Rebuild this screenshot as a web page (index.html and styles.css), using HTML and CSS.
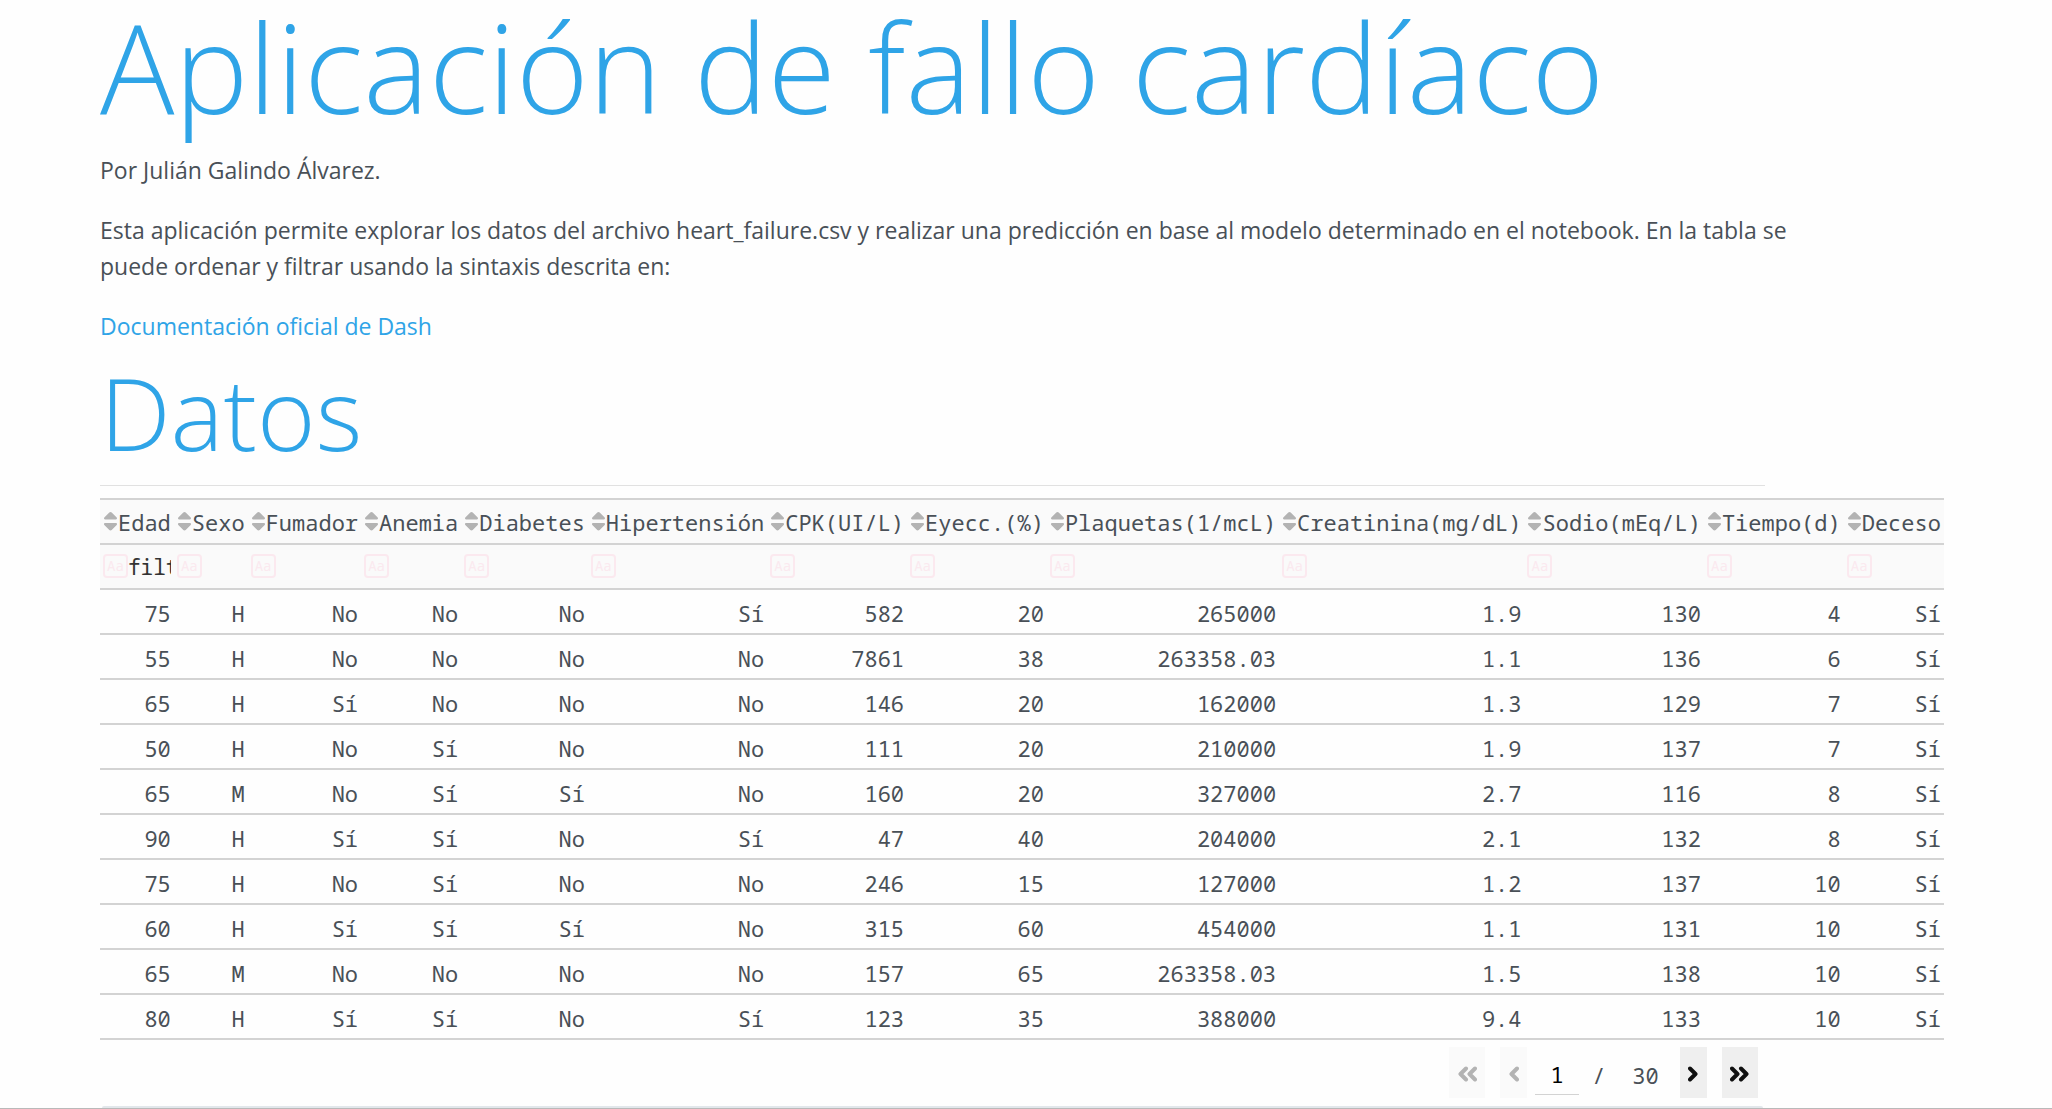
FILE: index.html
```html
<!DOCTYPE html>
<html lang="es">
<head>
<meta charset="utf-8">
<title>Aplicación de fallo cardíaco</title>
<link rel="stylesheet" href="styles.css">
</head>
<body>
<svg class="symbols" aria-hidden="true">
  <symbol id="sort" viewBox="0 0 13 19"><path d="M6.5 0C7 0 7.400 .2 7.700 .5L12.700 5.500C13.300 6.200 12.900 7.500 12 7.500H1C.1 7.500-.3 6.200.3 5.500L5.300.5C5.600.2 6 0 6.500 0ZM1 11H12C12.900 11 13.300 12.300 12.700 13L7.700 18C7.100 18.600 5.900 18.600 5.300 18L.3 13C-.3 12.300.1 11 1 11Z"/></symbol>
  <symbol id="angle" viewBox="0 0 10 16"><path d="M2 2.500 7.500 8 2 13.500"/></symbol>
  <symbol id="double-angle" viewBox="0 0 19 16"><path d="M2 2.500 7.500 8 2 13.500M11 2.500 16.500 8 11 13.500"/></symbol>
</svg>
<main class="container">
  <h1>Aplicación de fallo cardíaco</h1>
  <p>Por Julián Galindo Álvarez.</p>
  <p class="intro">Esta aplicación permite explorar los datos del archivo heart_failure.csv y realizar una predicción en base al modelo determinado en el notebook. En la tabla se puede ordenar y filtrar usando la sintaxis descrita en:</p>
  <p><a href="#">Documentación oficial de Dash</a></p>
  <h2>Datos</h2>
  <hr>
  <table>
    <thead>
      <tr>
        <th><div class="head"><button class="sort" aria-label="Ordenar"><svg><use href="#sort"/></svg></button>Edad</div></th>
        <th><div class="head"><button class="sort" aria-label="Ordenar"><svg><use href="#sort"/></svg></button>Sexo</div></th>
        <th><div class="head"><button class="sort" aria-label="Ordenar"><svg><use href="#sort"/></svg></button>Fumador</div></th>
        <th><div class="head"><button class="sort" aria-label="Ordenar"><svg><use href="#sort"/></svg></button>Anemia</div></th>
        <th><div class="head"><button class="sort" aria-label="Ordenar"><svg><use href="#sort"/></svg></button>Diabetes</div></th>
        <th><div class="head"><button class="sort" aria-label="Ordenar"><svg><use href="#sort"/></svg></button>Hipertensión</div></th>
        <th><div class="head"><button class="sort" aria-label="Ordenar"><svg><use href="#sort"/></svg></button>CPK(UI/L)</div></th>
        <th><div class="head"><button class="sort" aria-label="Ordenar"><svg><use href="#sort"/></svg></button>Eyecc.(%)</div></th>
        <th><div class="head"><button class="sort" aria-label="Ordenar"><svg><use href="#sort"/></svg></button>Plaquetas(1/mcL)</div></th>
        <th><div class="head"><button class="sort" aria-label="Ordenar"><svg><use href="#sort"/></svg></button>Creatinina(mg/dL)</div></th>
        <th><div class="head"><button class="sort" aria-label="Ordenar"><svg><use href="#sort"/></svg></button>Sodio(mEq/L)</div></th>
        <th><div class="head"><button class="sort" aria-label="Ordenar"><svg><use href="#sort"/></svg></button>Tiempo(d)</div></th>
        <th><div class="head"><button class="sort" aria-label="Ordenar"><svg><use href="#sort"/></svg></button>Deceso</div></th>
      </tr>
      <tr>
        <th><div class="filter"><button class="case">Aa</button><input type="text" aria-label="Filtrar Edad" placeholder="filter data..."></div></th>
        <th><div class="filter"><button class="case">Aa</button><input type="text" aria-label="Filtrar Sexo"></div></th>
        <th><div class="filter"><button class="case">Aa</button><input type="text" aria-label="Filtrar Fumador"></div></th>
        <th><div class="filter"><button class="case">Aa</button><input type="text" aria-label="Filtrar Anemia"></div></th>
        <th><div class="filter"><button class="case">Aa</button><input type="text" aria-label="Filtrar Diabetes"></div></th>
        <th><div class="filter"><button class="case">Aa</button><input type="text" aria-label="Filtrar Hipertensión"></div></th>
        <th><div class="filter"><button class="case">Aa</button><input type="text" aria-label="Filtrar CPK"></div></th>
        <th><div class="filter"><button class="case">Aa</button><input type="text" aria-label="Filtrar Eyecc."></div></th>
        <th><div class="filter"><button class="case">Aa</button><input type="text" aria-label="Filtrar Plaquetas"></div></th>
        <th><div class="filter"><button class="case">Aa</button><input type="text" aria-label="Filtrar Creatinina"></div></th>
        <th><div class="filter"><button class="case">Aa</button><input type="text" aria-label="Filtrar Sodio"></div></th>
        <th><div class="filter"><button class="case">Aa</button><input type="text" aria-label="Filtrar Tiempo"></div></th>
        <th><div class="filter"><button class="case">Aa</button><input type="text" aria-label="Filtrar Deceso"></div></th>
      </tr>
    </thead>
    <tbody>
      <tr><td>75</td><td>H</td><td>No</td><td>No</td><td>No</td><td>Sí</td><td>582</td><td>20</td><td>265000</td><td>1.9</td><td>130</td><td>4</td><td>Sí</td></tr>
      <tr><td>55</td><td>H</td><td>No</td><td>No</td><td>No</td><td>No</td><td>7861</td><td>38</td><td>263358.03</td><td>1.1</td><td>136</td><td>6</td><td>Sí</td></tr>
      <tr><td>65</td><td>H</td><td>Sí</td><td>No</td><td>No</td><td>No</td><td>146</td><td>20</td><td>162000</td><td>1.3</td><td>129</td><td>7</td><td>Sí</td></tr>
      <tr><td>50</td><td>H</td><td>No</td><td>Sí</td><td>No</td><td>No</td><td>111</td><td>20</td><td>210000</td><td>1.9</td><td>137</td><td>7</td><td>Sí</td></tr>
      <tr><td>65</td><td>M</td><td>No</td><td>Sí</td><td>Sí</td><td>No</td><td>160</td><td>20</td><td>327000</td><td>2.7</td><td>116</td><td>8</td><td>Sí</td></tr>
      <tr><td>90</td><td>H</td><td>Sí</td><td>Sí</td><td>No</td><td>Sí</td><td>47</td><td>40</td><td>204000</td><td>2.1</td><td>132</td><td>8</td><td>Sí</td></tr>
      <tr><td>75</td><td>H</td><td>No</td><td>Sí</td><td>No</td><td>No</td><td>246</td><td>15</td><td>127000</td><td>1.2</td><td>137</td><td>10</td><td>Sí</td></tr>
      <tr><td>60</td><td>H</td><td>Sí</td><td>Sí</td><td>Sí</td><td>No</td><td>315</td><td>60</td><td>454000</td><td>1.1</td><td>131</td><td>10</td><td>Sí</td></tr>
      <tr><td>65</td><td>M</td><td>No</td><td>No</td><td>No</td><td>No</td><td>157</td><td>65</td><td>263358.03</td><td>1.5</td><td>138</td><td>10</td><td>Sí</td></tr>
      <tr><td>80</td><td>H</td><td>Sí</td><td>Sí</td><td>No</td><td>Sí</td><td>123</td><td>35</td><td>388000</td><td>9.4</td><td>133</td><td>10</td><td>Sí</td></tr>
    </tbody>
  </table>
  <nav class="pager" aria-label="Páginas">
    <button class="wide" disabled aria-label="Primera"><svg class="double flip"><use href="#double-angle"/></svg></button>
    <button disabled aria-label="Anterior"><svg class="flip"><use href="#angle"/></svg></button>
    <div class="pages"><input type="text" value="1" aria-label="Página"><span>/</span><span class="total">30</span></div>
    <button aria-label="Siguiente"><svg><use href="#angle"/></svg></button>
    <button class="wide" aria-label="Última"><svg class="double"><use href="#double-angle"/></svg></button>
  </nav>
  <section class="panel"></section>
</main>
</body>
</html>
```
FILE: styles.css
```css
* {
  box-sizing: border-box;
}

body {
  display: flex;
  flex-direction: column;
  min-height: 100vh;
  margin: 0;
  border-bottom: 1px solid #b9b9b9;
  background: #fefefe;
  color: #495057;
  font: 23px/36px "Open Sans", "Noto Sans", sans-serif;
  overflow-x: hidden;
}

.symbols {
  display: none;
}

.container {
  display: flex;
  flex: 1;
  flex-direction: column;
  margin: 0 14% 0 100px;
}

h1,
h2 {
  margin: 0;
  color: #2fa4e7;
  font-weight: 300;
}

h1 {
  margin-bottom: 20px;
  font-size: 124px;
  line-height: 132px;
}

h2 {
  margin-bottom: 29px;
  font-size: 100px;
  line-height: 88px;
}

p {
  margin: 0 0 24px;
}

.intro {
  margin-right: -24px;
}

a {
  color: #2fa4e7;
  text-decoration: none;
}

hr {
  width: 100%;
  margin: 0 0 12px;
  border: 0;
  border-top: 1px solid #e1e1e1;
}

button,
input {
  margin: 0;
  padding: 0;
  border: 0;
  border-radius: 0;
  background: none;
  font: inherit;
}

table {
  align-self: flex-start;
  border-collapse: separate;
  border-spacing: 0;
  border-top: 2px solid #d3d3d3;
}

table,
.pager {
  font-family: "Noto Sans Mono", "DejaVu Sans Mono", monospace;
  font-size: 22px;
  line-height: 30px;
}

th,
td {
  height: 45px;
  padding: 2px 3px 0;
  border-bottom: 2px solid #d3d3d3;
  font-weight: 400;
  text-align: right;
  white-space: nowrap;
}

th {
  padding-top: 0;
  background: #fafafa;
}

.head,
.filter {
  display: flex;
  align-items: center;
}

.sort {
  display: flex;
  justify-content: center;
  width: 15px;
}

.sort svg {
  width: 13px;
  height: 19px;
  fill: #b3b3b3;
}

.case {
  flex: none;
  width: 25px;
  height: 24px;
  margin-bottom: 2px;
  border: 2px solid #fbe9ef;
  border-radius: 4px;
  color: #fbe9ef;
  font-size: 14px;
  line-height: 20px;
}

.filter input {
  flex: 1;
  width: 0;
  min-width: 0;
  height: 36px;
  color: #333;
  font-size: 21px;
}

.filter input::placeholder {
  color: #333;
  opacity: 1;
}

.pager {
  display: flex;
  justify-content: flex-end;
  gap: 15px;
  margin: 7px 7px 8px 0;
}

.pager button {
  display: flex;
  align-items: center;
  justify-content: center;
  width: 27px;
  height: 51px;
  background: #efefef;
  color: #101010;
}

.pager .wide {
  width: 36px;
}

.pager button:disabled {
  background: #fafafa;
  color: #b3b3b3;
}

.pager svg {
  width: 10px;
  height: 16px;
  margin-top: 3px;
  fill: none;
  stroke: currentColor;
  stroke-width: 4;
  stroke-linecap: round;
  stroke-linejoin: round;
}

.pager .double {
  width: 19px;
}

.flip {
  transform: scaleX(-1);
}

.pages {
  display: flex;
  align-items: center;
  gap: 13px;
  margin: 4px 6px 0 -7px;
}

.pages input {
  width: 44px;
  height: 41px;
  border-bottom: 1px solid #d3d3d3;
  color: #000;
  text-align: center;
}

.total {
  margin-left: 14px;
}

.panel {
  flex: 1;
  min-height: 2px;
  margin: 0 2px;
  border-radius: 4px 4px 0 0;
  background: #e2e7eb;
}
```
